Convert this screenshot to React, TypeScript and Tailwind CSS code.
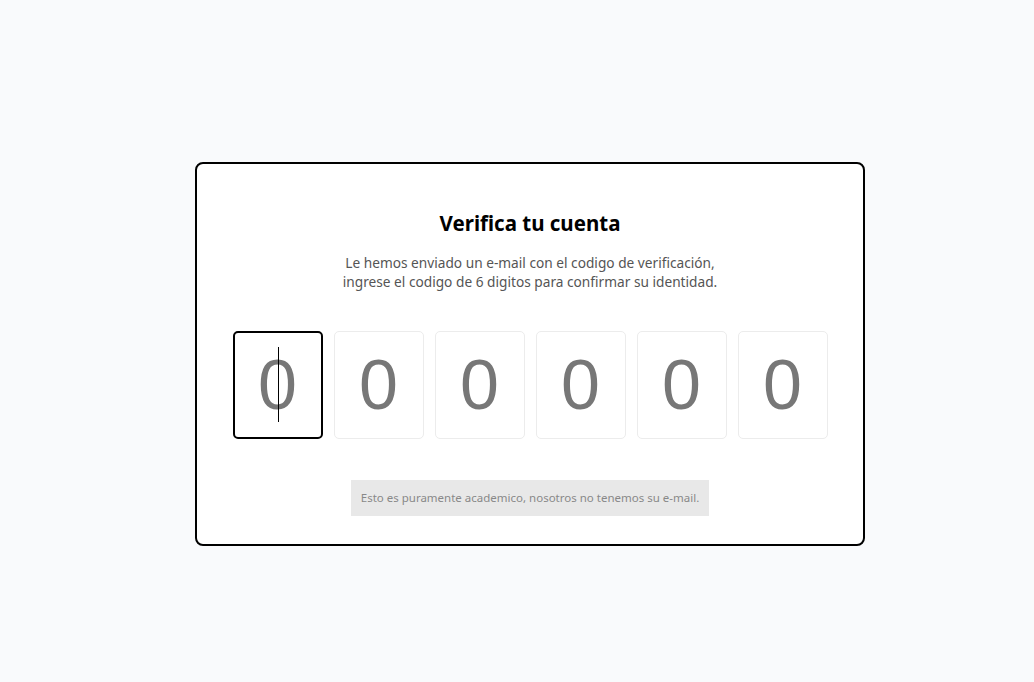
import { useState } from 'react';

export default function App() {
    const [digits] = useState(['0', '0', '0', '0', '0', '0']);

    return (
        <div className="min-h-screen bg-[#f9fafc] pl-[195px] pt-[162px]" style={{ fontFamily: '"Noto Sans", Lato, sans-serif' }}>
            <div className="w-[670px] h-[384px] bg-white border-2 border-black rounded-lg flex flex-col items-center">
                {/* Header */}
                <h1 className="mt-[45px] text-[20.5px] leading-7 font-bold text-black">Verifica tu cuenta</h1>
                <p className="mt-[16px] text-[13.7px] leading-[19px] text-[#555] text-center">
                    Le hemos enviado un e-mail con el codigo de verificación,
                    <br />
                    ingrese el codigo de 6 digitos para confirmar su identidad.
                </p>

                {/* Code inputs */}
                <div className="mt-[40px] flex gap-[11px]">
                    {digits.map((d, i) => (
                        <div
                            key={i}
                            className={`relative w-[90px] h-[108px] flex items-center justify-center rounded-[5px] ${i === 0 ? 'border-2 border-black' : 'border border-[#ececec]'
                                }`}
                        >
                            <span
                                className="text-[70px] leading-none text-[#777]"
                                style={{ fontFamily: '"Liberation Sans", Arial, sans-serif' }}
                            >
                                {d}
                            </span>
                            {i === 0 && <span className="absolute left-[43px] top-[14px] w-px h-[75px] bg-black" />}
                        </div>
                    ))}
                </div>

                {/* Note */}
                <div className="mt-[41px] w-[358px] h-[36px] bg-[#e8e8e8] flex items-center justify-center text-[11.5px] text-[#888]">
                    Esto es puramente academico, nosotros no tenemos su e-mail.
                </div>
            </div>
        </div>
    );
}
